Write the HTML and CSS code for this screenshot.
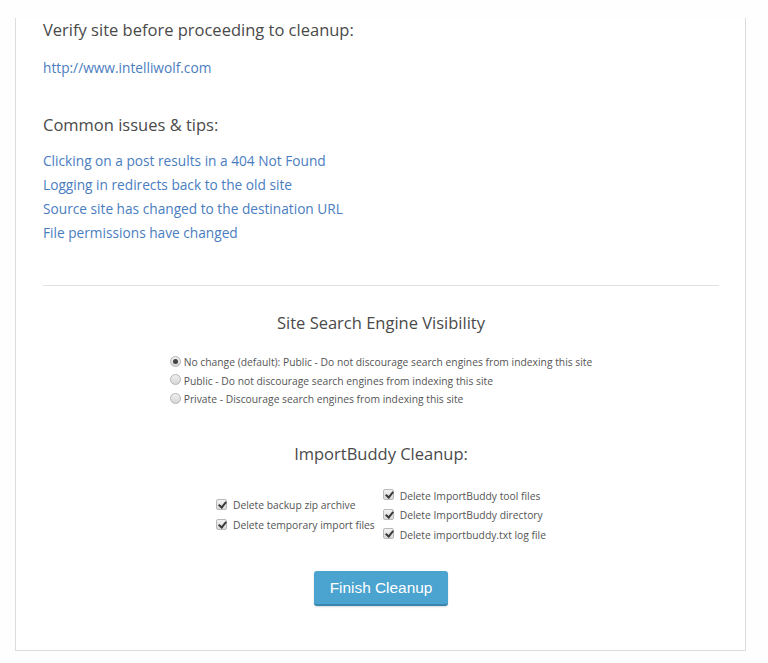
FILE: index.html
```html
<!DOCTYPE html>
<html>
<head>
<meta charset="utf-8">
<link rel="stylesheet" href="styles.css">
</head>
<body>
<div class="card">
  <h3 class="title">Verify site before proceeding to cleanup:</h3>
  <p class="site"><a href="#">http://www.intelliwolf.com</a></p>
  <h3 class="title tips">Common issues &amp; tips:</h3>
  <ul class="links">
    <li><a href="#">Clicking on a post results in a 404 Not Found</a></li>
    <li><a href="#">Logging in redirects back to the old site</a></li>
    <li><a href="#">Source site has changed to the destination URL</a></li>
    <li><a href="#">File permissions have changed</a></li>
  </ul>
  <hr class="sep">
  <h3 class="center-title">Site Search Engine Visibility</h3>
  <div class="radios">
    <label class="opt"><span class="radio checked"></span>No change (default): Public - Do not discourage search engines from indexing this site</label>
    <label class="opt"><span class="radio"></span>Public - Do not discourage search engines from indexing this site</label>
    <label class="opt"><span class="radio"></span>Private - Discourage search engines from indexing this site</label>
  </div>
  <h3 class="center-title cleanup">ImportBuddy Cleanup:</h3>
  <div class="checks">
    <div class="col">
      <label class="chk"><span class="box"></span>Delete backup zip archive</label>
      <label class="chk"><span class="box"></span>Delete temporary import files</label>
    </div>
    <div class="col">
      <label class="chk"><span class="box"></span>Delete ImportBuddy tool files</label>
      <label class="chk"><span class="box"></span>Delete ImportBuddy directory</label>
      <label class="chk"><span class="box"></span>Delete importbuddy.txt log file</label>
    </div>
  </div>
  <div class="actions"><button class="btn" type="button">Finish Cleanup</button></div>
</div>
</body>
</html>
```
FILE: styles.css
```css
html, body {
  margin: 0;
  background: #fefefe;
}
body {
  font-family: "Open Sans", "Noto Sans", sans-serif;
  color: #555;
}
.card {
  margin-left: 15px;
  width: 676px;
  padding: 0 26px 44px 27px;
  background: #fff;
  border: 1px solid #dcdcdc;
  border-top: 0;
}
.title {
  margin: 18px 0 0;
  font-size: 16.5px;
  font-weight: 400;
  line-height: 24px;
  color: #4a4a4a;
}
.title.tips {
  margin-top: 33px;
}
a {
  color: #4a7dbf;
  text-decoration: none;
}
.site {
  margin: 14px 0 0;
  font-size: 13.7px;
  line-height: 24px;
}
.links {
  list-style: none;
  margin: 12px 0 0;
  padding: 0;
  font-size: 13.7px;
  line-height: 24px;
}
.sep {
  margin: 40px 0 0;
  border: 0;
  border-top: 1px solid #e2e2e2;
  height: 0;
}
.center-title {
  margin: 25px 0 0;
  text-align: center;
  font-size: 16.5px;
  font-weight: 400;
  line-height: 24px;
  color: #4a4a4a;
}
.center-title.cleanup {
  margin-top: 33px;
}
.radios {
  margin-top: 18px;
  display: flex;
  flex-direction: column;
  align-items: flex-start;
  width: max-content;
  margin-left: auto;
  margin-right: auto;
  font-size: 10.3px;
  line-height: 18.5px;
  color: #555;
}
.opt {
  display: flex;
  align-items: center;
}
.radio {
  width: 9px;
  height: 9px;
  border: 1px solid #b5b5b5;
  border-radius: 50%;
  background: linear-gradient(#f0f0f0, #d6d6d6);
  margin-right: 3px;
  margin-top: -2px;
  position: relative;
  box-sizing: content-box;
}
.radio.checked::after {
  content: "";
  position: absolute;
  left: 2px;
  top: 2px;
  width: 5px;
  height: 5px;
  border-radius: 50%;
  background: #444;
}
.checks {
  margin-top: 21px;
  display: flex;
  justify-content: center;
  align-items: center;
  gap: 8px;
  font-size: 10.3px;
  line-height: 19.5px;
  color: #555;
}
.col {
  display: flex;
  flex-direction: column;
}
.chk {
  display: flex;
  align-items: center;
}
.box {
  width: 9px;
  height: 9px;
  border: 1px solid #b9b9b9;
  border-radius: 2px;
  background: linear-gradient(#f2f2f2, #d8d8d8);
  margin-right: 6px;
  margin-top: -3px;
  position: relative;
  box-sizing: content-box;
}
.box::after {
  content: "";
  position: absolute;
  left: 3px;
  top: 0px;
  width: 3px;
  height: 6px;
  border: solid #3a3a3a;
  border-width: 0 2px 2px 0;
  transform: rotate(40deg);
}
.actions {
  margin-top: 26px;
  display: flex;
  justify-content: center;
}
.btn {
  width: 134px;
  height: 35px;
  padding: 0;
  border: 0;
  border-bottom: 2px solid #3a86ae;
  border-radius: 3px;
  background: #4ba3cf;
  color: #fff;
  font-family: "Liberation Sans", Arial, sans-serif;
  font-size: 15.4px;
  box-shadow: 0 1px 2px rgba(0,0,0,0.15);
}
```
